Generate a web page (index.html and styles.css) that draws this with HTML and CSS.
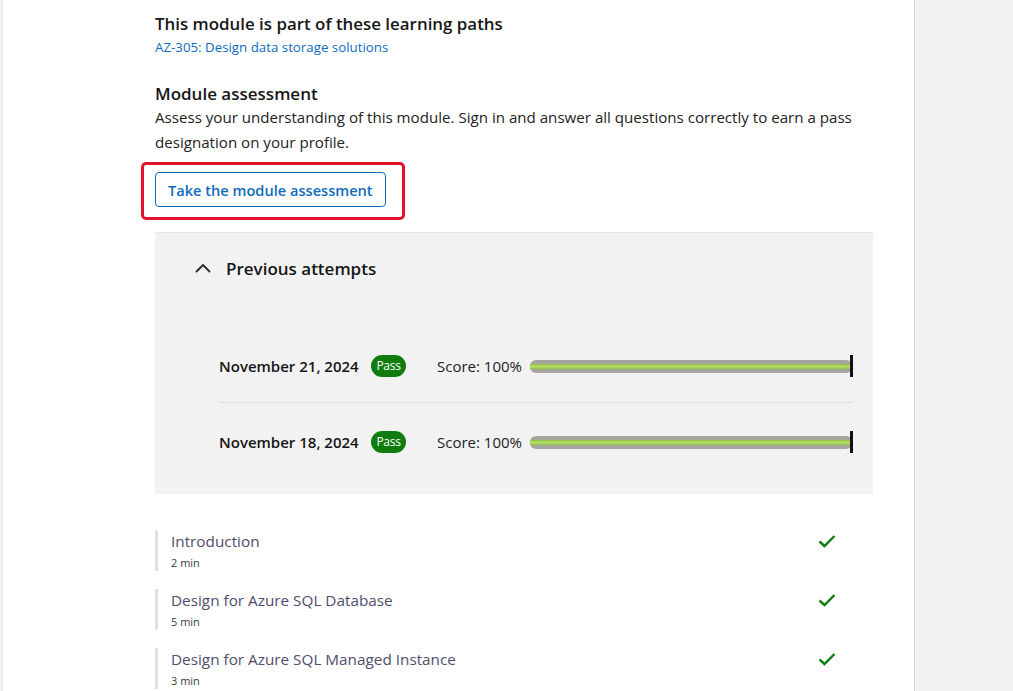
FILE: index.html
```html
<!DOCTYPE html>
<html lang="en">
<head>
  <meta charset="UTF-8" />
  <meta name="viewport" content="width=device-width, initial-scale=1.0"/>
  <title>Module assessment</title>
  <link rel="stylesheet" href="styles.css">
</head>
<body>
  <div class="page">
    <main class="main">
      <section class="paths">
        <h2>This module is part of these learning paths</h2>
        <a href="#" class="path-link">AZ-305: Design data storage solutions</a>
      </section>

      <section class="assessment">
        <h2>Module assessment</h2>
        <p>Assess your understanding of this module. Sign in and answer all questions correctly to earn a pass designation on your profile.</p>
        <div class="highlight">
          <button class="btn-outline">Take the module assessment</button>
        </div>
      </section>

      <div class="attempts">
        <div class="attempts-head">
          <svg class="chevron" width="16" height="10" viewBox="0 0 16 10">
            <path d="M1.5 8.5 L8 2 L14.5 8.5" fill="none" stroke="#2b2b2b" stroke-width="1.8" stroke-linecap="round" stroke-linejoin="round"/>
          </svg>
          <span>Previous attempts</span>
        </div>

        <div class="attempt-list">
          <div class="attempt">
            <span class="date">November 21, 2024</span>
            <span class="badge">Pass</span>
            <span class="score">Score: 100%</span>
            <div class="meter">
              <div class="track"><div class="fill"></div></div>
              <div class="marker"></div>
            </div>
          </div>
          <div class="attempt">
            <span class="date">November 18, 2024</span>
            <span class="badge">Pass</span>
            <span class="score">Score: 100%</span>
            <div class="meter">
              <div class="track"><div class="fill"></div></div>
              <div class="marker"></div>
            </div>
          </div>
        </div>
      </div>

      <ul class="units">
        <li class="unit">
          <div class="unit-text">
            <a href="#">Introduction</a>
            <span class="time">2 min</span>
          </div>
          <svg class="check" width="18" height="14" viewBox="0 0 18 14"><path d="M1.5 7.5 L6.5 12 L16.5 2" fill="none" stroke="#107c10" stroke-width="2.4"/></svg>
        </li>
        <li class="unit">
          <div class="unit-text">
            <a href="#">Design for Azure SQL Database</a>
            <span class="time">5 min</span>
          </div>
          <svg class="check" width="18" height="14" viewBox="0 0 18 14"><path d="M1.5 7.5 L6.5 12 L16.5 2" fill="none" stroke="#107c10" stroke-width="2.4"/></svg>
        </li>
        <li class="unit">
          <div class="unit-text">
            <a href="#">Design for Azure SQL Managed Instance</a>
            <span class="time">3 min</span>
          </div>
          <svg class="check" width="18" height="14" viewBox="0 0 18 14"><path d="M1.5 7.5 L6.5 12 L16.5 2" fill="none" stroke="#107c10" stroke-width="2.4"/></svg>
        </li>
      </ul>
    </main>
    <aside class="side"></aside>
  </div>
</body>
</html>
```

FILE: styles.css
```css
body {
  margin: 0;
  font-family: "Open Sans", "Noto Sans", sans-serif;
  color: #161616;
  background: #f2f2f2;
}

.page {
  display: flex;
  min-height: 100vh;
}

.main {
  width: 913px;
  margin-left: 2px;
  background: #fff;
  border-left: 1px solid #e3e3e3;
  border-right: 1px solid #d4d4d4;
  padding: 13px 40px 0 152px;
  box-sizing: border-box;
  overflow: hidden;
  height: 691px;
}

.side {
  flex: 1;
  background: #f2f2f2;
}

h2 {
  margin: 0;
  font-size: 17px;
  line-height: 22px;
  font-weight: 600;
}

.paths h2 {
  margin-bottom: 2px;
  font-size: 16.9px;
}

.path-link {
  display: block;
  font-size: 13.3px;
  line-height: 20px;
  color: #0f6cbd;
  text-decoration: none;
}

.assessment {
  margin-top: 26px;
}

.assessment p {
  margin: 0;
  font-size: 15.12px;
  line-height: 25px;
  color: #222;
}

.highlight {
  display: inline-block;
  margin: 7px 0 0 -14px;
  padding: 7px 16px 10px 11px;
  border: 3px solid #e3132e;
  border-radius: 5px;
}

.btn-outline {
  display: block;
  height: 35px;
  padding: 0 12px;
  background: #fff;
  border: 1px solid #0f6cbd;
  border-radius: 4px;
  color: #0f6cbd;
  font-family: inherit;
  font-size: 14.6px;
  font-weight: 600;
}

.attempts {
  margin-top: 12px;
  width: 718px;
  background: #f2f2f2;
  border-top: 1px solid #e6e6e6;
  padding-bottom: 41px;
}

.attempts-head {
  display: flex;
  align-items: center;
  gap: 15px;
  padding: 24px 0 0 40px;
  height: 22px;
  font-size: 17px;
  font-weight: 600;
}

.attempt-list {
  margin: 76px 20px 0 64px;
}

.attempt {
  display: flex;
  align-items: center;
  height: 22px;
  padding-bottom: 25px;
}

.attempt + .attempt {
  padding: 28px 0 0;
  border-top: 1px solid #e0e0e0;
}

.date {
  font-size: 15px;
  font-weight: 600;
  width: 152px;
}

.badge {
  width: 35px;
  height: 22px;
  line-height: 22px;
  border-radius: 11px;
  background: #107c10;
  color: #fff;
  font-size: 12px;
  text-align: center;
  letter-spacing: -0.3px;
}

.score {
  margin-left: 31px;
  font-size: 15px;
  color: #222;
}

.meter {
  flex: 1;
  display: flex;
  align-items: center;
  margin-left: 8px;
}

.track {
  flex: 1;
  height: 13px;
  border-radius: 6px;
  background: #a5a49e;
  display: flex;
  align-items: center;
}

.fill {
  width: 100%;
  height: 5px;
  background: linear-gradient(#8cc43f, #b6dd6a 50%, #8cc43f);
}

.marker {
  width: 3px;
  height: 22px;
  background: #111;
  margin-left: -2px;
}

.units {
  list-style: none;
  margin: 36px 0 0;
  padding: 0;
  width: 718px;
}

.unit {
  display: flex;
  justify-content: space-between;
  align-items: flex-start;
  border-left: 3px solid #e1e1e1;
  padding: 0 37px 0 13px;
  height: 41px;
  margin-bottom: 18px;
}

.unit-text {
  display: flex;
  flex-direction: column;
}

.unit-text a {
  font-size: 15.3px;
  line-height: 22px;
  color: #514d6c;
  text-decoration: none;
}

.time {
  margin-top: 3px;
  font-size: 11px;
  line-height: 16px;
  color: #3a3a3a;
}

.check {
  margin-top: 4px;
}
```
